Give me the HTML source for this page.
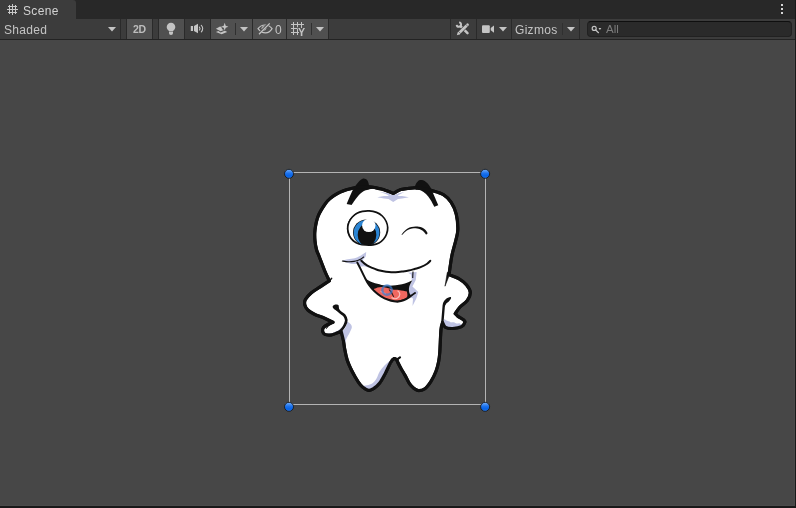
<!DOCTYPE html>
<html>
<head>
<meta charset="utf-8">
<title>Scene</title>
<style>
html,body{margin:0;padding:0;}
body{width:796px;height:508px;overflow:hidden;background:#474747;font-family:"Liberation Sans",sans-serif;font-size:12px;color:#c4c4c4;position:relative;}
.abs{position:absolute;}
#tabrow{left:0;top:0;width:796px;height:19px;background:#282828;}
#tab{left:0;top:0;width:76px;height:19px;background:#3c3c3c;border-top-right-radius:3px;}
#tab span{position:absolute;left:23px;top:4px;font-size:12px;color:#d2d2d2;letter-spacing:0.35px;}
#toolbar{left:0;top:19px;width:796px;height:20px;background:#3c3c3c;}
#tbline{left:0;top:39px;width:796px;height:1px;background:#232323;}
#bottom{left:0;top:506px;width:796px;height:2px;background:#191919;}
#bottom2{left:0;top:505px;width:795px;height:1px;background:#4b4b4b;}
#rightb{left:795px;top:0;width:1px;height:508px;background:#191919;}
#rightb2{left:794px;top:40px;width:1px;height:466px;background:#4b4b4b;}
.btn{position:absolute;top:19px;height:20px;background:#3c3c3c;}
.on{background:#505050;}
.sep{position:absolute;top:19px;height:20px;width:1px;background:#2a2a2a;}
.lbl,#tab span{will-change:transform;}
.lbl{position:absolute;color:#c4c4c4;font-size:12px;white-space:nowrap;}
svg{position:absolute;left:0;top:0;overflow:visible;}
</style>
</head>
<body>
<div id="tabrow" class="abs"></div>
<div id="tab" class="abs"><span>Scene</span></div>
<div id="toolbar" class="abs"></div>
<div id="tbline" class="abs"></div>

<!-- toolbar buttons -->
<div class="lbl" style="left:4px;top:23px;letter-spacing:0.3px;">Shaded</div>
<div class="sep" style="left:120px"></div>
<div class="sep" style="left:126px"></div>
<div class="btn on" style="left:127px;width:25px"></div>
<div class="lbl" style="left:132.5px;top:23px;font-size:10.5px;font-weight:bold;color:#bdbdbd;letter-spacing:-0.4px;">2D</div>
<div class="sep" style="left:152px"></div>
<div class="sep" style="left:158px"></div>
<div class="btn on" style="left:159px;width:25px"></div>
<div class="sep" style="left:184px"></div>
<div class="sep" style="left:210px"></div>
<div class="btn on" style="left:211px;width:41px"></div>
<div class="sep" style="left:252px"></div>
<div class="btn on" style="left:253px;width:33px"></div>
<div class="lbl" style="left:274.5px;top:23px;">0</div>
<div class="sep" style="left:286px"></div>
<div class="btn on" style="left:287px;width:41px"></div>
<div class="sep" style="left:328px"></div>

<div class="sep" style="left:450px"></div>
<div class="sep" style="left:476px"></div>
<div class="sep" style="left:511px"></div>
<div class="lbl" style="left:515px;top:23px;letter-spacing:0.3px;">Gizmos</div>
<div class="sep" style="left:579px"></div>
<div class="abs" style="left:587px;top:21px;width:203px;height:14px;background:#2a2a2a;border:1px solid #212121;border-top-color:#0f0f0f;border-radius:4px;"></div>
<div class="lbl" style="left:606px;top:23px;color:#7d7d7d;font-size:11.5px;">All</div>

<div id="bottom2" class="abs"></div>
<div id="rightb2" class="abs"></div>
<div id="bottom" class="abs"></div>
<div id="rightb" class="abs"></div>

<!-- icons + scene -->
<svg id="ui" width="796" height="508" viewBox="0 0 796 508">
<!--ICONS-->
<!-- tab hash icon -->
<g stroke="#c8c8c8" stroke-width="1" fill="none" shape-rendering="crispEdges">
<path d="M8 6.500H17M7 9.500H18M8 12.500H17M9.500 5V14M12.500 4V15M15.500 5V14"/>
</g>
<!-- kebab -->
<g fill="#d6d6d6"><rect x="781" y="4" width="2" height="2"/><rect x="781" y="8" width="2" height="2"/><rect x="781" y="12" width="2" height="2"/></g>
<!-- dropdown arrows -->
<g fill="#c4c4c4">
<path d="M108 27h8l-4 4.5z"/>
<path d="M240 27h8l-4 4.5z"/>
<path d="M316 27h8l-4 4.5z"/>
<path d="M499 27h8l-4 4.5z"/>
<path d="M567 27h8l-4 4.5z"/>
</g>
<!-- thin inner separators -->
<g fill="#303030"><rect x="235" y="23" width="1" height="12"/><rect x="311" y="23" width="1" height="12"/><rect x="562" y="23" width="1" height="12"/></g>
<!-- bulb -->
<g fill="#c4c4c4">
<path d="M171 22.7a4.3 4.3 0 0 1 4.3 4.3c0 1.6-.9 2.6-1.6 3.3-.3.3-.5.5-.5.7h-4.4c0-.2-.2-.4-.5-.7-.7-.7-1.6-1.700-1.600-3.300a4.300 4.300 0 0 1 4.300-4.300z"/>
<path d="M169 31.600h4v1.300a2 2 0 0 1-4 0z"/>
</g>
<!-- speaker -->
<g fill="#c4c4c4">
<rect x="190.800" y="26" width="2.200" height="5"/>
<path d="M194 26l4-2.200v9.400l-4-2.200z"/>
</g>
<g fill="none" stroke="#c4c4c4" stroke-width="1.100" stroke-linecap="round">
<path d="M199.400 27a2.200 2.200 0 0 1 0 3"/>
<path d="M201.300 25.300a4.600 4.600 0 0 1 0 6.600"/>
</g>
<!-- fx layers -->
<g fill="#c4c4c4">
<path d="M224.700 22.800l1 2.900 2.700 1-2.700 1-1 2.900-1-2.900-2.700-1 2.700-1z"/>
<path d="M215.900 28.700L220 26.600L221.300 27L222.200 29.300L224 30L220.600 31.300Z"/>
<path d="M215.900 31.900L218.300 30.900L220.700 32.400L223.500 31.300L225 30.800L227.200 31.900L221.600 34.300Z"/>
</g>
<!-- hidden eye -->
<g fill="none" stroke="#c4c4c4" stroke-width="1.100">
<circle cx="263.900" cy="28.300" r="2.400" fill="#b0b0b0" stroke="none"/>
<path d="M258 28.600C260 26 262.300 25 265 25C267.800 25 270.300 26.200 272.100 28.600C270.300 31.500 268 32.900 265.500 32.900C262.500 32.900 260 31.300 258 28.600Z"/>
<path d="M258.500 34L269.600 22.900" stroke="#505050" stroke-width="2.300"/>
<path d="M259 34.200L269.700 23.400" stroke-width="1.300"/>
</g>
<!-- grid snap -->
<g stroke="#c4c4c4" stroke-width="1" fill="none" shape-rendering="crispEdges">
<path d="M293.500 22V35M297.500 22V35M301.500 22V28M291 24.500H304M291 28.500H298M291 32.500H299"/>
</g>
<text x="298" y="35.700" font-family="Liberation Sans, sans-serif" font-weight="bold" font-size="10.700" fill="#c4c4c4" stroke="#505050" stroke-width="1.600" paint-order="stroke">Y</text>
<!-- tools -->
<g fill="none" stroke="#c4c4c4">
<path d="M459.100 22.400A2.200 2.200 0 1 1 456.700 24.800" stroke-width="1.900"/>
<path d="M460.500 26.200L467.500 33.200" stroke-width="2.500" stroke-linecap="round"/>
<path d="M466.300 25.900L460.300 31.800" stroke="#3c3c3c" stroke-width="3.900"/>
<path d="M467.500 24.700L459.100 33" stroke-width="2.700" stroke-linecap="round"/>
<path d="M465.300 23.900L468.300 26.900M458.600 31.500L460.600 33.500" stroke="#3c3c3c" stroke-width="0.600"/>
</g>
<path d="M456.800 35.300L457.900 32.100L460 34.200Z" fill="#c4c4c4"/>
<!-- camera -->
<g fill="#c4c4c4">
<rect x="482" y="25.200" width="7.800" height="7.700" rx="1"/>
<path d="M490.700 28l3.300-2.600v7.300l-3.300-2.500z"/>
</g>
<!-- search icon -->
<g fill="none" stroke="#c4c4c4" stroke-width="1.200">
<circle cx="594.200" cy="28.400" r="2"/>
<path d="M595.700 30l2.800 2.700" stroke-linecap="round"/>
</g>
<path d="M598.500 28h2.800l-1.400 1.900z" fill="#c4c4c4"/>
<!--/ICONS-->
<!--SCENE-->
<g id="tooth">
<path d="M393.2 193.5C392.7 193.2 391.2 192.5 390.0 192.0C388.8 191.5 387.2 190.9 386.0 190.5C384.8 190.1 384.3 189.8 382.6 189.4C380.9 189.0 378.3 188.2 376.0 187.8C373.7 187.4 371.7 186.9 368.7 186.8C365.7 186.7 361.0 186.9 358.0 187.2C355.0 187.5 353.1 188.2 350.6 188.8C348.1 189.4 345.2 190.2 343.0 191.0C340.8 191.8 339.5 192.4 337.5 193.5C335.5 194.6 333.0 196.1 331.0 197.8C329.0 199.5 327.6 200.5 325.5 203.5C323.4 206.5 319.9 211.6 318.2 216.0C316.4 220.4 315.5 225.8 315.0 230.0C314.5 234.2 314.7 237.7 315.0 241.0C315.3 244.3 315.9 247.5 316.6 250.0C317.3 252.5 317.6 252.4 319.0 256.0C320.4 259.6 323.3 267.4 325.0 271.5C326.7 275.6 328.6 279.2 329.3 280.8C327.8 281.8 323.3 284.8 320.3 286.8C317.3 288.8 313.7 290.8 311.2 292.9C308.7 295.0 306.5 297.5 305.4 299.5C304.3 301.5 304.4 303.1 304.8 304.8C305.2 306.6 306.2 308.4 307.8 310.0C309.4 311.6 311.5 312.8 314.3 314.2C317.1 315.6 321.4 316.8 324.5 318.2C327.6 319.6 331.6 321.6 333.0 322.3C332.2 322.6 329.6 323.5 328.0 324.4C326.4 325.3 324.3 326.4 323.4 327.6C322.5 328.8 322.5 330.4 322.7 331.5C322.9 332.6 323.4 333.8 324.8 334.4C326.2 335.0 329.1 335.2 331.4 334.9C333.6 334.6 336.6 333.0 338.3 332.5C340.0 332.0 340.8 332.0 341.3 331.9C341.6 333.2 342.7 337.1 343.3 340.0C343.9 342.9 344.1 345.7 344.7 349.0C345.3 352.3 346.2 356.8 347.2 360.0C348.2 363.2 349.4 365.7 350.7 368.5C352.0 371.3 353.6 374.2 355.2 377.0C356.8 379.8 358.8 383.0 360.5 385.0C362.2 387.0 363.9 388.0 365.3 388.9C366.8 389.8 367.8 390.5 369.2 390.4C370.6 390.3 372.1 389.6 373.9 388.4C375.6 387.2 377.8 385.4 379.7 383.0C381.6 380.6 383.3 377.3 385.1 373.9C386.9 370.5 389.1 365.1 390.6 362.5C392.1 359.9 392.9 359.1 394.0 358.6C395.1 358.2 396.5 359.6 397.0 359.8C397.1 360.2 396.9 360.6 397.6 362.0C398.3 363.4 399.8 366.4 401.0 368.5C402.2 370.6 403.4 372.4 404.8 374.9C406.2 377.4 408.0 381.4 409.5 383.7C411.0 385.9 412.5 387.2 414.0 388.4C415.5 389.5 416.6 390.5 418.4 390.6C420.2 390.7 422.8 390.3 424.9 388.8C427.0 387.3 428.9 384.6 430.8 381.7C432.7 378.8 434.7 374.7 436.0 371.3C437.3 367.9 438.1 364.5 438.7 361.3C439.3 358.1 439.4 357.3 439.8 352.0C440.2 346.7 440.5 334.4 441.0 329.5C441.5 324.6 442.3 323.7 442.6 322.5C443.1 323.3 443.8 326.3 445.5 327.3C447.2 328.3 449.9 328.6 452.6 328.5C455.3 328.4 459.4 327.8 461.5 326.7C463.6 325.6 464.6 323.4 464.9 322.2C465.2 321.0 464.4 320.6 463.2 319.6C462.0 318.6 459.1 317.2 457.8 316.2C456.5 315.2 455.6 314.0 455.2 313.6C456.0 312.5 458.0 309.2 460.0 307.0C462.0 304.8 465.6 302.9 467.3 300.5C469.0 298.1 470.4 295.2 470.3 292.6C470.2 290.0 468.5 287.3 466.6 285.0C464.7 282.7 461.7 280.4 458.8 278.7C455.9 277.0 450.6 275.4 449.0 274.7C449.5 271.6 450.7 261.8 451.8 256.0C452.9 250.2 454.9 244.4 455.9 240.0C456.9 235.6 457.7 234.1 457.8 229.8C457.9 225.5 457.4 218.9 456.3 214.3C455.2 209.7 453.4 205.6 451.2 202.3C449.0 199.0 446.5 196.6 443.3 194.6C440.1 192.6 435.4 191.6 432.0 190.6C428.6 189.6 425.9 189.1 423.0 188.6C420.1 188.1 417.2 187.8 414.6 187.8C412.1 187.8 410.0 188.2 407.7 188.5C405.4 188.8 402.9 189.0 401.0 189.5C399.1 190.0 397.8 190.9 396.5 191.6C395.2 192.3 393.8 193.2 393.2 193.5Z" fill="#ffffff" stroke="#111111" stroke-width="3" stroke-linejoin="round"/>
<path d="M346.7 204.0C347.2 202.7 348.8 198.7 350.0 196.0C351.2 193.3 352.6 190.3 354.0 188.0C355.4 185.7 357.0 183.6 358.5 182.0C360.0 180.4 361.7 178.9 363.2 178.6C364.7 178.3 366.3 179.1 367.3 180.3C368.3 181.5 368.9 184.9 369.2 185.8C369.8 186.3 371.9 188.3 372.5 188.8C371.0 189.2 366.0 189.9 363.5 191.3C361.0 192.7 359.3 194.7 357.3 197.0C355.3 199.3 352.6 203.6 351.6 204.9C350.8 204.8 347.5 204.2 346.7 204.0Z" fill="#111111"/>
<path d="M414.5 187.0C414.9 186.2 415.9 183.7 416.8 182.5C417.8 181.3 418.9 180.2 420.2 180.0C421.5 179.8 423.1 179.9 424.7 181.0C426.3 182.1 428.2 183.8 429.8 186.3C431.4 188.8 432.9 192.8 434.3 196.0C435.7 199.2 437.6 203.7 438.3 205.2C437.6 205.4 434.9 206.4 434.2 206.7C433.6 205.5 431.7 201.6 430.3 199.5C428.9 197.4 427.6 195.5 426.0 194.0C424.4 192.5 422.7 191.2 421.0 190.5C419.3 189.8 416.8 189.7 416.0 189.5C415.8 189.1 414.8 187.4 414.5 187.0Z" fill="#111111"/>
<path d="M392.5 361.0C391.4 363.2 388.1 370.2 386.0 374.0C383.9 377.8 382.0 381.5 380.0 384.0C378.0 386.5 375.8 388.0 374.0 389.0C372.2 390.0 371.0 390.5 369.0 390.0C367.0 389.5 363.2 386.7 362.0 386.0C362.8 385.9 365.2 385.8 367.0 385.3C368.8 384.8 370.9 384.3 372.5 383.2C374.1 382.1 375.3 380.4 376.5 378.5C377.7 376.6 378.4 373.7 379.7 371.5C381.0 369.3 382.6 367.4 384.5 365.5C386.4 363.6 389.2 361.4 391.0 360.0C392.8 358.6 394.8 357.8 395.5 357.3C395.0 357.9 393.0 360.4 392.5 361.0Z" fill="#bfc3e3"/>
<path d="M341.5 331.8C342.2 331.1 344.6 329.2 345.5 327.5C346.4 325.8 346.9 322.5 347.2 321.5C347.8 321.9 349.7 323.0 350.5 324.0C351.3 325.0 352.0 326.1 351.8 327.6C351.6 329.1 350.4 331.2 349.5 333.0C348.6 334.8 347.2 336.8 346.5 338.5C345.8 340.2 345.4 342.2 345.2 343.0C344.9 342.2 343.9 339.9 343.3 338.0C342.7 336.1 341.8 332.8 341.5 331.8Z" fill="#bfc3e3"/>
<path d="M328 333.600C334 333.400 339.500 330.500 343.500 325.500L344.500 327C341 331.500 335 335 328 335Z" fill="#bfc3e3"/>
<path d="M444.0 319.0C444.4 319.2 445.7 320.0 446.5 320.4C447.3 320.8 448.6 321.1 449.0 321.2C449.3 321.4 450.7 322.2 451.0 322.4C451.5 322.4 453.5 322.3 454.0 322.3C454.4 322.5 456.1 323.4 456.5 323.6C457.0 323.5 459.0 323.3 459.5 323.2C459.8 323.4 461.2 324.3 461.5 324.5C461.4 324.8 462.4 325.9 461.0 326.5C459.6 327.1 455.5 327.9 453.0 328.0C450.5 328.1 447.6 327.6 446.0 327.0C444.4 326.4 443.9 324.9 443.5 324.5C443.6 323.6 443.9 319.9 444.0 319.0Z" fill="#bfc3e3"/>
<path d="M379.400 191.800L388.500 193.300L392 195L394.500 195L398 193.400L404.300 192.100L399.500 194.600L397.500 196L402 196L409 197.300L402 198.400L398 199L393.200 202.100L388.500 199L384 198.400L377.200 197.300L384 196L389 196L387 194.600Z" fill="#bfc3e3"/>
<path d="M342.2 260.6C343.2 260.4 345.9 259.6 348.0 259.2C350.1 258.8 352.7 258.7 354.7 258.2C356.7 257.7 358.5 256.7 360.0 256.0C361.5 255.3 362.5 254.5 363.5 253.8C364.5 253.1 365.8 252.3 366.2 252.0C366.1 252.8 366.1 255.1 365.6 256.5C365.1 257.9 363.0 259.0 363.0 260.3C363.0 261.6 364.4 263.2 365.5 264.5C366.6 265.8 368.8 267.2 369.5 267.8C368.6 267.6 365.5 266.5 364.0 266.3C362.5 266.1 361.6 266.9 360.5 266.5C359.4 266.1 358.9 264.2 357.5 263.8C356.1 263.4 353.8 264.2 352.0 264.0C350.2 263.8 348.1 263.2 346.5 262.6C344.9 262.0 342.9 260.9 342.2 260.6Z" fill="#bfc3e3"/>
<path d="M408 272.800L416.600 272L415.800 280L412.400 286.500L418.300 292L416.300 298.500L412.500 306L413 298.500L409.500 297L408.500 288L412 281L411 274.500Z" fill="#bfc3e3"/>
<path d="M393.2 193.5C392.7 193.2 391.2 192.5 390.0 192.0C388.8 191.5 387.2 190.9 386.0 190.5C384.8 190.1 384.3 189.8 382.6 189.4C380.9 189.0 378.3 188.2 376.0 187.8C373.7 187.4 371.7 186.9 368.7 186.8C365.7 186.7 361.0 186.9 358.0 187.2C355.0 187.5 353.1 188.2 350.6 188.8C348.1 189.4 345.2 190.2 343.0 191.0C340.8 191.8 339.5 192.4 337.5 193.5C335.5 194.6 333.0 196.1 331.0 197.8C329.0 199.5 327.6 200.5 325.5 203.5C323.4 206.5 319.9 211.6 318.2 216.0C316.4 220.4 315.5 225.8 315.0 230.0C314.5 234.2 314.7 237.7 315.0 241.0C315.3 244.3 315.9 247.5 316.6 250.0C317.3 252.5 317.6 252.4 319.0 256.0C320.4 259.6 323.3 267.4 325.0 271.5C326.7 275.6 328.6 279.2 329.3 280.8C327.8 281.8 323.3 284.8 320.3 286.8C317.3 288.8 313.7 290.8 311.2 292.9C308.7 295.0 306.5 297.5 305.4 299.5C304.3 301.5 304.4 303.1 304.8 304.8C305.2 306.6 306.2 308.4 307.8 310.0C309.4 311.6 311.5 312.8 314.3 314.2C317.1 315.6 321.4 316.8 324.5 318.2C327.6 319.6 331.6 321.6 333.0 322.3C332.2 322.6 329.6 323.5 328.0 324.4C326.4 325.3 324.3 326.4 323.4 327.6C322.5 328.8 322.5 330.4 322.7 331.5C322.9 332.6 323.4 333.8 324.8 334.4C326.2 335.0 329.1 335.2 331.4 334.9C333.6 334.6 336.6 333.0 338.3 332.5C340.0 332.0 340.8 332.0 341.3 331.9C341.6 333.2 342.7 337.1 343.3 340.0C343.9 342.9 344.1 345.7 344.7 349.0C345.3 352.3 346.2 356.8 347.2 360.0C348.2 363.2 349.4 365.7 350.7 368.5C352.0 371.3 353.6 374.2 355.2 377.0C356.8 379.8 358.8 383.0 360.5 385.0C362.2 387.0 363.9 388.0 365.3 388.9C366.8 389.8 367.8 390.5 369.2 390.4C370.6 390.3 372.1 389.6 373.9 388.4C375.6 387.2 377.8 385.4 379.7 383.0C381.6 380.6 383.3 377.3 385.1 373.9C386.9 370.5 389.1 365.1 390.6 362.5C392.1 359.9 392.9 359.1 394.0 358.6C395.1 358.2 396.5 359.6 397.0 359.8C397.1 360.2 396.9 360.6 397.6 362.0C398.3 363.4 399.8 366.4 401.0 368.5C402.2 370.6 403.4 372.4 404.8 374.9C406.2 377.4 408.0 381.4 409.5 383.7C411.0 385.9 412.5 387.2 414.0 388.4C415.5 389.5 416.6 390.5 418.4 390.6C420.2 390.7 422.8 390.3 424.9 388.8C427.0 387.3 428.9 384.6 430.8 381.7C432.7 378.8 434.7 374.7 436.0 371.3C437.3 367.9 438.1 364.5 438.7 361.3C439.3 358.1 439.4 357.3 439.8 352.0C440.2 346.7 440.5 334.4 441.0 329.5C441.5 324.6 442.3 323.7 442.6 322.5C443.1 323.3 443.8 326.3 445.5 327.3C447.2 328.3 449.9 328.6 452.6 328.5C455.3 328.4 459.4 327.8 461.5 326.7C463.6 325.6 464.6 323.4 464.9 322.2C465.2 321.0 464.4 320.6 463.2 319.6C462.0 318.6 459.1 317.2 457.8 316.2C456.5 315.2 455.6 314.0 455.2 313.6C456.0 312.5 458.0 309.2 460.0 307.0C462.0 304.8 465.6 302.9 467.3 300.5C469.0 298.1 470.4 295.2 470.3 292.6C470.2 290.0 468.5 287.3 466.6 285.0C464.7 282.7 461.7 280.4 458.8 278.7C455.9 277.0 450.6 275.4 449.0 274.7C449.5 271.6 450.7 261.8 451.8 256.0C452.9 250.2 454.9 244.4 455.9 240.0C456.9 235.6 457.7 234.1 457.8 229.8C457.9 225.5 457.4 218.9 456.3 214.3C455.2 209.7 453.4 205.6 451.2 202.3C449.0 199.0 446.5 196.6 443.3 194.6C440.1 192.6 435.4 191.6 432.0 190.6C428.6 189.6 425.9 189.1 423.0 188.6C420.1 188.1 417.2 187.8 414.6 187.8C412.1 187.8 410.0 188.2 407.7 188.5C405.4 188.8 402.9 189.0 401.0 189.5C399.1 190.0 397.8 190.9 396.5 191.6C395.2 192.3 393.8 193.2 393.2 193.5Z" fill="none" stroke="#111111" stroke-width="3.200" stroke-linejoin="round"/>
<path d="M366.0 279.0C367.2 279.6 370.4 281.6 373.0 282.6C375.6 283.6 379.0 284.4 381.6 284.9C384.2 285.4 386.1 285.5 388.5 285.6C390.9 285.7 393.4 285.5 395.7 285.3C397.9 285.1 400.0 284.6 402.0 284.2C404.0 283.8 405.9 283.3 407.6 282.6C409.3 281.9 411.5 280.6 412.3 280.2C411.8 281.3 409.7 284.9 409.2 287.0C408.7 289.1 409.0 291.1 409.3 292.5C409.6 293.9 410.7 295.0 411.0 295.5C410.5 295.9 409.1 297.4 407.8 298.2C406.6 299.0 405.1 299.7 403.5 300.3C401.9 300.9 400.1 301.4 398.5 301.6C396.9 301.8 395.7 301.6 394.0 301.3C392.3 301.0 390.5 300.6 388.3 299.8C386.1 299.0 383.3 297.7 381.0 296.3C378.7 294.9 376.5 293.2 374.5 291.3C372.5 289.4 370.4 287.1 369.0 285.0C367.6 282.9 366.5 280.0 366.0 279.0Z" fill="#111111"/>
<path d="M373.6 289.3C374.2 289.0 376.2 288.0 377.5 287.6C378.8 287.2 380.1 287.0 381.6 287.0C383.1 287.0 384.7 287.4 386.5 287.8C388.3 288.2 390.4 289.1 392.5 289.5C394.6 289.9 396.6 289.6 399.0 290.0C401.4 290.4 405.6 291.3 406.9 291.6C407.0 292.2 407.5 294.3 407.4 295.5C407.3 296.7 406.5 298.1 406.3 298.6C405.2 298.9 402.1 300.0 400.0 300.3C397.9 300.6 395.7 300.9 393.5 300.7C391.3 300.5 389.0 300.0 387.0 299.3C385.0 298.6 383.3 297.7 381.6 296.7C379.9 295.7 378.3 294.4 377.0 293.2C375.7 292.0 374.2 289.9 373.6 289.3Z" fill="#ef675f"/>
<path d="M397.600 290.700C400.500 292.500 400.600 296 397.500 298C395.500 299.200 393 298.600 391.500 297.600" fill="none" stroke="#f8c0be" stroke-width="1.200"/><path d="M380.500 291.300L386 294" fill="none" stroke="#f8c0be" stroke-width="0.900"/><path d="M389 289.500L393.800 297L391.500 291.500Z" fill="#111111" stroke="#111111" stroke-width="0.500"/>
<path d="M361.3 260.8C361.8 261.3 363.5 262.8 364.5 263.6C365.5 264.4 366.2 264.9 367.4 265.6C368.6 266.3 370.0 267.0 371.5 267.6C373.0 268.2 374.7 269.0 376.3 269.5C377.9 270.0 379.4 270.4 381.0 270.8C382.6 271.2 384.4 271.5 386.1 271.7C387.8 271.9 389.6 272.1 391.2 272.2C392.8 272.3 393.9 272.4 395.7 272.3C397.5 272.2 399.8 271.9 402.0 271.6C404.2 271.3 406.6 271.0 408.7 270.6C410.8 270.2 412.5 269.6 414.5 269.0C416.5 268.4 418.5 268.1 420.6 267.2C422.7 266.3 425.6 264.8 427.2 263.7C428.8 262.6 429.8 261.3 430.3 260.8" fill="none" stroke="#111111" stroke-width="2" stroke-linecap="round"/>
<path d="M357.3 262.6C357.8 263.6 359.2 266.3 360.4 268.6C361.6 270.9 362.9 273.9 364.3 276.6C365.7 279.3 367.3 282.6 369.0 285.0C370.7 287.4 372.5 289.4 374.5 291.3C376.5 293.2 378.7 294.9 381.0 296.3C383.3 297.7 386.1 299.0 388.3 299.8C390.5 300.6 392.3 301.0 394.0 301.3C395.7 301.6 396.9 301.8 398.5 301.6C400.1 301.4 401.9 300.9 403.5 300.3C405.1 299.7 406.5 299.0 407.8 298.2C409.1 297.4 410.3 296.4 411.5 295.5C412.7 294.6 414.4 293.4 415.0 293.0" fill="none" stroke="#111111" stroke-width="2" stroke-linecap="round"/>
<path d="M413 271.500L412.700 278" fill="none" stroke="#111111" stroke-width="1.100"/>
<path d="M342.4 261.0C343.0 261.1 344.8 261.5 346.0 261.6C347.2 261.7 348.4 261.8 349.7 261.8C351.0 261.8 352.7 261.6 354.0 261.4C355.3 261.2 356.4 260.9 357.6 260.5C358.8 260.1 360.0 259.6 361.0 259.0C362.0 258.4 363.2 257.3 363.6 257.0" fill="none" stroke="#111111" stroke-width="1.100" stroke-linecap="round"/>
<path d="M347.7 229.0C347.6 226.8 348.0 224.5 348.8 222.5C349.6 220.5 350.9 218.5 352.3 217.0C353.7 215.5 355.3 214.2 357.0 213.3C358.7 212.4 360.5 211.8 362.5 211.4C364.5 211.0 366.9 210.7 369.2 210.9C371.5 211.1 374.3 211.6 376.5 212.4C378.7 213.2 380.7 214.5 382.3 216.0C383.9 217.5 385.3 219.6 386.2 221.5C387.1 223.4 387.6 225.4 387.7 227.5C387.8 229.6 387.3 232.0 386.6 234.0C385.9 236.0 384.8 237.8 383.5 239.3C382.2 240.8 380.8 242.1 379.0 243.0C377.2 243.9 375.2 244.5 373.0 244.8C370.8 245.1 368.3 245.1 366.0 245.0C363.7 244.9 361.1 244.7 359.0 244.0C356.9 243.3 355.1 242.3 353.5 241.0C351.9 239.7 350.5 238.0 349.5 236.0C348.5 234.0 347.8 231.2 347.7 229.0Z" fill="#ffffff" stroke="#111111" stroke-width="1.700"/>
<path d="M349.0 235.5C348.7 234.4 347.5 231.2 347.4 229.0C347.3 226.8 347.7 224.5 348.5 222.5C349.3 220.5 350.6 218.6 352.0 217.0C353.4 215.4 356.2 213.8 357.0 213.2" fill="none" stroke="#111111" stroke-width="1"/>
<clipPath id="eyeclip"><path d="M347.7 229.0C347.6 226.8 348.0 224.5 348.8 222.5C349.6 220.5 350.9 218.5 352.3 217.0C353.7 215.5 355.3 214.2 357.0 213.3C358.7 212.4 360.5 211.8 362.5 211.4C364.5 211.0 366.9 210.7 369.2 210.9C371.5 211.1 374.3 211.6 376.5 212.4C378.7 213.2 380.7 214.5 382.3 216.0C383.9 217.5 385.3 219.6 386.2 221.5C387.1 223.4 387.6 225.4 387.7 227.5C387.8 229.6 387.3 232.0 386.6 234.0C385.9 236.0 384.8 237.8 383.5 239.3C382.2 240.8 380.8 242.1 379.0 243.0C377.2 243.9 375.2 244.5 373.0 244.8C370.8 245.1 368.3 245.1 366.0 245.0C363.7 244.9 361.1 244.7 359.0 244.0C356.9 243.3 355.1 242.3 353.5 241.0C351.9 239.7 350.5 238.0 349.5 236.0C348.5 234.0 347.8 231.2 347.7 229.0Z"/></clipPath>
<g clip-path="url(#eyeclip)">
<ellipse cx="366.600" cy="232.600" rx="13.600" ry="13.200" fill="#111111"/>
<ellipse cx="366.600" cy="232.700" rx="12.900" ry="12.600" fill="#2b85d4"/>
<ellipse cx="367" cy="235" rx="9.300" ry="11.300" fill="#111111"/>
<circle cx="368.800" cy="225.400" r="6.700" fill="#ffffff"/>
</g>
<path d="M401.5 234.6C402.0 234.0 403.3 232.2 404.3 231.2C405.3 230.2 406.4 229.2 407.6 228.5C408.8 227.8 410.1 227.4 411.5 227.1C412.9 226.8 414.4 226.6 415.7 226.6C416.9 226.6 417.9 226.6 419.0 226.8C420.1 227.0 420.9 227.1 422.0 227.6C423.1 228.1 424.4 228.9 425.3 229.8C426.2 230.7 427.3 232.6 427.7 233.2L426.100 234.800L426.1 234.8C425.8 234.3 424.8 232.8 424.0 232.0C423.2 231.2 422.3 230.6 421.4 230.1C420.5 229.6 419.6 229.1 418.6 228.8C417.7 228.5 416.8 228.3 415.7 228.3C414.6 228.3 413.2 228.3 412.0 228.6C410.8 228.8 409.4 229.2 408.2 229.8C407.0 230.4 406.0 231.1 405.0 232.0C404.0 232.9 402.5 234.5 402.0 235.0Z" fill="#111111"/>
<path d="M337.2 308.8C337.6 309.3 338.7 310.9 339.9 312.0C341.1 313.1 343.2 314.0 344.3 315.4C345.4 316.8 346.2 318.5 346.3 320.2C346.4 321.9 345.4 323.9 344.6 325.5C343.8 327.1 342.6 328.6 341.5 329.8C340.4 331.0 338.8 332.1 338.3 332.5" fill="none" stroke="#111111" stroke-width="2.700" stroke-linecap="round"/>
<path d="M332.700 306.200C333.500 304.200 337.800 303.800 338.600 305.300C339 307 338.600 309 340.300 312L338 311.800C336.500 310.200 332.200 309 332.700 306.200Z" fill="#111111"/>
<path d="M329.500 280.600L331.600 278.400" stroke="#111111" stroke-width="1.500" stroke-linecap="round"/>
<path d="M450.300 272.500L445 286.200L447.300 272.500Z" fill="#111111" stroke="#111111" stroke-width="0.600"/>
<path d="M450.800 297C452 298.200 449.500 301.300 446.500 303.300L444.300 307L442.800 304C443.500 300.500 447.800 296.600 450.800 297Z" fill="#111111"/>
<path d="M443.800 305L442.300 323" stroke="#111111" stroke-width="2.400" stroke-linecap="round"/>
<path d="M333.400 322.200L328.500 323.700L326.200 328.800L328.700 325.900L330.800 324.600Z" fill="#111111" stroke="#111111" stroke-width="0.600" stroke-linejoin="round"/>
<path d="M396.800 359.600L400 357.400" stroke="#111111" stroke-width="2.200" stroke-linecap="round"/>
</g>
<circle cx="387.050" cy="290.100" r="4.700" fill="none" stroke="#3f7bcc" stroke-opacity="0.720" stroke-width="2.400"/>
<g fill="#b4b4b4" shape-rendering="crispEdges"><rect x="289" y="172" width="197" height="1"/><rect x="289" y="404" width="197" height="1"/><rect x="289" y="172" width="1" height="233"/><rect x="485" y="172" width="1" height="233"/></g>
<defs><linearGradient id="hg" x1="0" y1="0" x2="0" y2="1"><stop offset="0.050" stop-color="#6aa9fb"/><stop offset="0.450" stop-color="#1d72ec"/><stop offset="0.750" stop-color="#0462e6"/><stop offset="1" stop-color="#2b7cf0"/></linearGradient></defs>
<circle cx="289.0" cy="173.8" r="4.500" fill="url(#hg)" stroke="#161616" stroke-opacity="0.850" stroke-width="1"/>
<circle cx="485.1" cy="173.8" r="4.500" fill="url(#hg)" stroke="#161616" stroke-opacity="0.850" stroke-width="1"/>
<circle cx="289.0" cy="406.8" r="4.500" fill="url(#hg)" stroke="#161616" stroke-opacity="0.850" stroke-width="1"/>
<circle cx="485.1" cy="406.8" r="4.500" fill="url(#hg)" stroke="#161616" stroke-opacity="0.850" stroke-width="1"/>
<!--/SCENE-->
</svg>
</body>
</html>
